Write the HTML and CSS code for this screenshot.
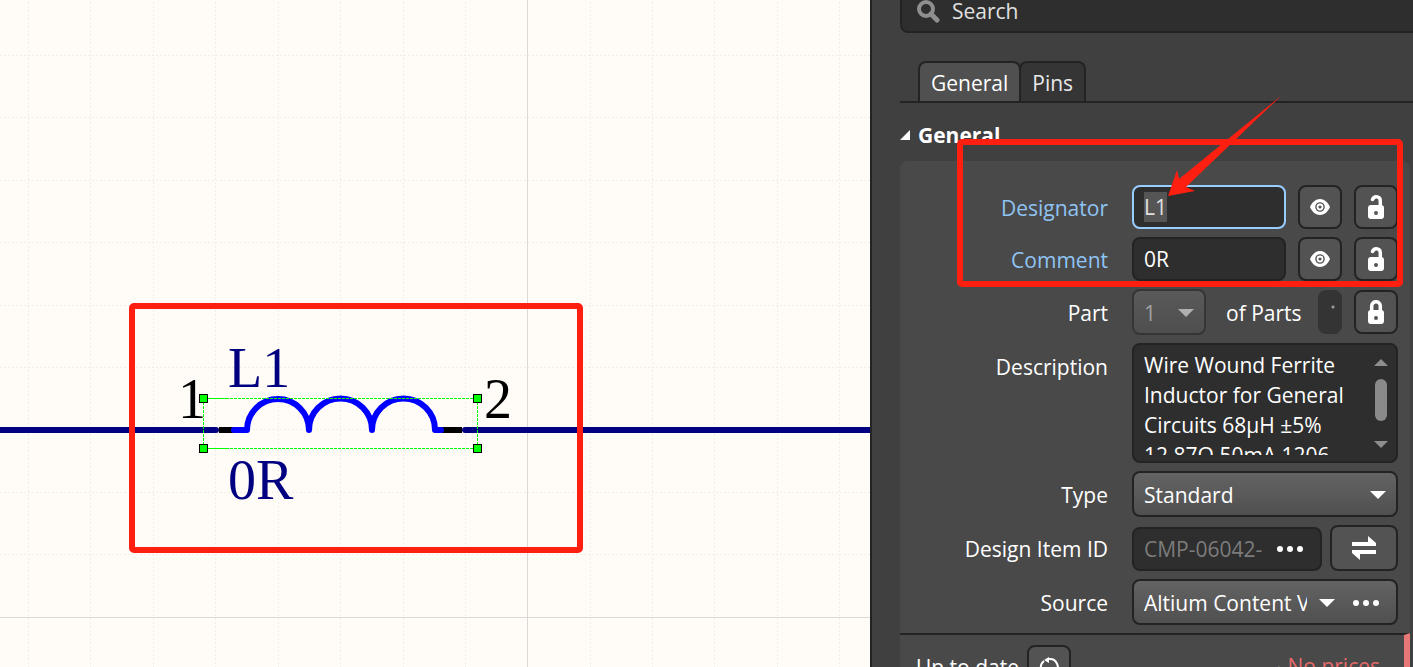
FILE: index.html
```html
<!DOCTYPE html>
<html lang="en">
<head>
    <meta charset="UTF-8">
    <title>Properties</title>
    <link rel="stylesheet" href="styles.css">
</head>

<body>

    <!-- icons -->
    <svg class="sprite" aria-hidden="true">
        <symbol id="eye" viewBox="0 0 20 16">
            <path fill="#fff" fill-rule="evenodd" d="M0 8 C2 3 6 0 10 0 C14 0 18 3 20 8 C18 13 14 16 10 16 C6 16 2 13 0 8 Z M10 3.200 A4.800 4.800 0 1 0 10 12.800 A4.800 4.800 0 1 0 10 3.200 Z"/>
            <circle cx="10" cy="8" r="2.500" fill="none" stroke="#fff" stroke-width="1.800"/>
        </symbol>
        <symbol id="unlock" viewBox="0 0 16 24">
            <path fill="none" stroke="#fff" stroke-width="3.500" stroke-linecap="round" d="M4.500 4.500 C5.500 2 8 1.600 9.500 1.900 C11.500 2.300 12.300 3.800 12.300 6 V11"/>
            <path fill="#fff" fill-rule="evenodd" d="M3 10 H13 Q16 10 16 13 V21 Q16 24 13 24 H3 Q0 24 0 21 V13 Q0 10 3 10 Z M8 16 A2 2 0 1 0 8 20 A2 2 0 1 0 8 16 Z"/>
        </symbol>
        <symbol id="lock" viewBox="0 0 16 24">
            <path fill="none" stroke="#fff" stroke-width="3.500" d="M3.700 11 V6 A4.300 4.300 0 0 1 12.300 6 V11"/>
            <path fill="#fff" fill-rule="evenodd" d="M3 10 H13 Q16 10 16 13 V21 Q16 24 13 24 H3 Q0 24 0 21 V13 Q0 10 3 10 Z M8 16 A2 2 0 1 0 8 20 A2 2 0 1 0 8 16 Z"/>
        </symbol>
        <symbol id="dots" viewBox="0 0 26 6">
            <g fill="#fff"><circle cx="3" cy="3" r="3"/><circle cx="13" cy="3" r="3"/><circle cx="23" cy="3" r="3"/></g>
        </symbol>
    </svg>

    <main class="schematic">
        <svg class="sheet" width="100%" height="100%">
            <!-- grid -->
            <path class="grid" d="M28.500 2V2000M90.500 2V2000M153.500 2V2000M215.500 2V2000M278.500 2V2000M340.500 2V2000M403.500 2V2000M465.500 2V2000M590.500 2V2000M652.500 2V2000M714.500 2V2000M777.500 2V2000M839.500 2V2000"/>
            <path class="grid" d="M0 55.500H3000M0 117.500H3000M0 180.500H3000M0 242.500H3000M0 305.500H3000M0 367.500H3000M0 429.500H3000M0 492.500H3000M0 554.500H3000"/>
            <path class="grid-major" d="M527.500 0V2000M0 617.500H3000"/>

            <!-- wires and pins -->
            <line class="wire" x1="0" y1="430" x2="216" y2="430"/>
            <line class="wire" x1="465" y1="430" x2="100%" y2="430"/>
            <path class="pin" d="M219 430H233M442 430H462"/>
            <path class="coil" d="M234 430H247 A31 31 0 0 1 309 430 A31 31 0 0 1 372 430 A31 31 0 0 1 435 430 H441"/>

            <!-- texts -->
            <text class="net" x="228" y="387">L1</text>
            <text class="net" x="228" y="499">0R</text>
            <text class="pin-no" x="178" y="418">1</text>
            <text class="pin-no" x="484" y="418">2</text>

            <!-- selection -->
            <path class="select-line" d="M226 398.500H477M226 448.500H477M203.500 398V448M477.500 398V448"/>
            <path class="select-solid" d="M203 398.500H227M203 448.500H227"/>
            <g class="handle">
                <rect x="199.500" y="394.500" width="8" height="8"/>
                <rect x="473.500" y="394.500" width="8" height="8"/>
                <rect x="199.500" y="444.500" width="8" height="8"/>
                <rect x="473.500" y="444.500" width="8" height="8"/>
            </g>

            <rect class="mark" x="132" y="306" width="448" height="244" rx="2"/>
        </svg>
    </main>

    <aside class="panel">
        <div class="search">
            <svg width="24" height="24" viewBox="0 0 24 24" fill="none" stroke="#8e8e8e">
                <circle cx="10" cy="10" r="7" stroke-width="4"/>
                <path d="M15 15L21 21" stroke-width="5" stroke-linecap="round"/>
            </svg>
            <input type="text" placeholder="Search" aria-label="Search">
        </div>

        <nav class="tabs">
            <button class="tab active">General</button>
            <button class="tab">Pins</button>
        </nav>

        <h2 class="section-title">
            <svg width="10" height="10" viewBox="0 0 10 10"><path d="M10 0V10H0Z" fill="#fff"/></svg>
            General
        </h2>

        <form class="card">
            <div class="fields">
                <label class="linked" for="designator">Designator</label>
                <div class="row">
                    <div class="field focused"><input type="text" id="designator" value="L1"></div>
                    <button type="button" class="btn" aria-label="Show designator"><svg width="20" height="16"><use href="#eye"/></svg></button>
                    <button type="button" class="btn" aria-label="Lock designator"><svg width="16" height="24"><use href="#unlock"/></svg></button>
                </div>

                <label class="linked" for="comment">Comment</label>
                <div class="row">
                    <div class="field"><input type="text" id="comment" value="0R"></div>
                    <button type="button" class="btn" aria-label="Show comment"><svg width="20" height="16"><use href="#eye"/></svg></button>
                    <button type="button" class="btn" aria-label="Lock comment"><svg width="16" height="24"><use href="#unlock"/></svg></button>
                </div>

                <label for="part">Part</label>
                <div class="row tall">
                    <div class="combo part">
                        <select id="part" disabled><option>1</option></select>
                        <svg class="arrow" width="16" height="8" viewBox="0 0 16 8"><path d="M0 0H16L8 8Z"/></svg>
                    </div>
                    <span class="of-parts">of Parts</span>
                    <div class="count"></div>
                    <button type="button" class="btn" aria-label="Lock part"><svg width="16" height="24"><use href="#lock"/></svg></button>
                </div>

                <label class="top" for="description">Description</label>
                <div class="memo">
                    <textarea id="description">Wire Wound Ferrite Inductor for General Circuits 68μH ±5% 12.87Ω 50mA 1206</textarea>
                    <div class="scroll">
                        <svg width="14" height="7" viewBox="0 0 14 7"><path d="M0 7H14L7 0Z"/></svg>
                        <div class="thumb"></div>
                        <svg width="14" height="7" viewBox="0 0 14 7"><path d="M0 0H14L7 7Z"/></svg>
                    </div>
                </div>

                <label for="type">Type</label>
                <div class="combo">
                    <select id="type"><option>Standard</option></select>
                    <svg class="arrow" width="16" height="8" viewBox="0 0 16 8"><path d="M0 0H16L8 8Z"/></svg>
                </div>

                <label for="item-id">Design Item ID</label>
                <div class="row id-row">
                    <div class="field">
                        <input type="text" id="item-id" value="CMP-06042-" disabled>
                        <button type="button" class="more" aria-label="Choose item"><svg width="26" height="6"><use href="#dots"/></svg></button>
                    </div>
                    <button type="button" class="btn wide" aria-label="Replace">
                        <svg width="24" height="24" viewBox="0 0 24 24"><path fill="#fff" d="M0 6H16V0L24 7V10H0ZM24 18H8V24L0 17V14H24Z"/></svg>
                    </button>
                </div>

                <label for="source">Source</label>
                <div class="combo source">
                    <select id="source"><option>Altium Content Vault</option></select>
                    <svg class="arrow" width="16" height="8" viewBox="0 0 16 8"><path d="M0 0H16L8 8Z"/></svg>
                    <button type="button" class="more" aria-label="Choose source"><svg width="26" height="6"><use href="#dots"/></svg></button>
                </div>
            </div>

            <div class="status">
                <span>Up to date</span>
                <button type="button" class="btn" aria-label="Refresh">
                    <svg width="20" height="20" viewBox="0 0 20 20" fill="none" stroke="#fff" stroke-width="2">
                        <path d="M4 16A8 8 0 0 1 5 4M10 2A8 8 0 0 1 16 16"/>
                        <path d="M10 0L5 3L10 6Z" fill="#fff" stroke="none"/>
                    </svg>
                </button>
                <span class="no-prices">No prices</span>
            </div>
        </form>

        <div class="mark-box"></div>
        <svg class="mark-arrow" width="114" height="101" viewBox="0 0 114 101">
            <path fill="#ff1f11" d="M0 101L9 75L11 84L114 0L18 92L27 96Z"/>
        </svg>
    </aside>

    <script>
        // start with the designator ready to be overwritten
        document.getElementById("designator").focus();
        document.getElementById("designator").select();
    </script>
</body>
</html>
```
FILE: styles.css
```css
* {
    box-sizing: border-box;
}

body {
    display: flex;
    margin: 0;
    height: 100vh;
    overflow: hidden;
    background: #404040;
    color: #fff;
    font-family: "Open Sans", "Noto Sans", sans-serif;
    font-size: 21px;
    line-height: 30px;
}

button, input, select, textarea {
    margin: 0;
    padding: 0;
    border: none;
    outline: none;
    background: none;
    color: inherit;
    font: inherit;
}

svg {
    display: block;
    flex: none;
}

.sprite {
    position: absolute;
    width: 0;
    height: 0;
}

/* schematic */
.schematic {
    flex: 1;
    min-width: 0;
    overflow: hidden;
    background: #fffcf8;
}

.grid {
    fill: none;
    stroke: #efeeeb;
    stroke-dasharray: 2 2;
}

.grid-major {
    fill: none;
    stroke: #dad9d6;
}

.wire {
    stroke: #000080;
    stroke-width: 6;
    stroke-linecap: round;
}

.pin {
    stroke: #000;
    stroke-width: 6;
}

.coil {
    fill: none;
    stroke: #00f;
    stroke-width: 6;
    stroke-linecap: round;
    stroke-linejoin: round;
}

.net, .pin-no {
    font-family: "Liberation Serif", serif;
    font-size: 56px;
}

.net {
    fill: #000080;
}

.select-line, .select-solid {
    stroke: #0f0;
}

.select-line {
    stroke-dasharray: 3 1;
}

.handle {
    fill: #0f0;
    stroke: #000;
}

.mark {
    fill: none;
    stroke: #ff1f11;
    stroke-width: 6;
}

/* properties panel */
.panel {
    position: relative;
    flex: 0 0 543px;
    padding-left: 28px;
    border-left: 2px solid #232323;
}

.search {
    display: flex;
    align-items: center;
    gap: 12px;
    height: 33px;
    padding: 0 0 9px 14px;
    border: solid #232323;
    border-width: 0 0 2px 2px;
    border-radius: 0 0 0 8px;
    background: #2e2e2e;
}

.search input {
    flex: 1;
    min-width: 0;
}

.search input::placeholder {
    color: #e0e0e0;
}

.tabs {
    display: flex;
    margin-top: 28px;
    padding-left: 18px;
    border-bottom: 2px solid #232323;
}

.tab {
    height: 40px;
    padding: 2px 11px 0;
    border: 2px solid #232323;
    border-bottom: none;
    border-radius: 8px 8px 0 0;
    background: #353535;
    color: #e8e8e8;
}

.tab + .tab {
    margin-left: -2px;
}

.tab.active {
    background: #505050;
    color: #fff;
}

.section-title {
    display: flex;
    align-items: center;
    gap: 8px;
    height: 58px;
    margin: 0;
    padding-top: 6px;
    font-size: 21px;
}

.card {
    margin-right: 3px;
    padding-top: 24px;
    border-radius: 8px 8px 0 0;
    background: #494949;
}

.fields {
    display: grid;
    grid-template-columns: 208px minmax(0, 1fr);
    gap: 8px 24px;
    align-items: center;
    padding: 0 12px 8px 0;
}

.fields label {
    padding-top: 2px;
    text-align: right;
}

.fields .linked {
    color: #8fc4f4;
}

.fields .top {
    align-self: start;
    padding-top: 9px;
}

.row {
    display: flex;
    align-items: center;
    gap: 12px;
}

.tall {
    height: 46px;
}

.field {
    display: flex;
    flex: 1;
    align-items: center;
    min-width: 0;
    height: 44px;
    padding: 0 10px;
    border: 2px solid #232323;
    border-radius: 8px;
    background: #2e2e2e;
}

.field input {
    flex: 1;
    min-width: 0;
    width: 0;
}

.field input:disabled {
    color: #7c7c7c;
}

.focused {
    border-color: #99ccff;
}

.focused input::selection {
    background: #555;
    color: #e0e0e0;
}

.btn {
    display: flex;
    flex: none;
    align-items: center;
    justify-content: center;
    width: 44px;
    height: 44px;
    border: 2px solid #232323;
    border-radius: 8px;
    background: #535353;
}

.combo {
    display: flex;
    align-items: center;
    height: 46px;
    padding: 2px 10px 0;
    border: 2px solid #232323;
    border-radius: 8px;
    background: linear-gradient(#636363, #505050);
}

.combo select {
    flex: 1;
    min-width: 0;
    width: 0;
    height: 30px;
    overflow: hidden;
    appearance: none;
    opacity: 1;
}

.arrow {
    fill: #fff;
}

.part {
    width: 74px;
    border-color: #353535;
    background: linear-gradient(#5a5a5a, #4e4e4e);
    color: #a0a0a0;
}

.part .arrow {
    fill: #b0b0b0;
}

.of-parts {
    flex: 1;
    padding: 2px 0 0 8px;
    white-space: nowrap;
}

.count {
    width: 24px;
    height: 44px;
    border-radius: 8px;
    background: radial-gradient(circle at 15px 17px, #999 1px, #343434 2px);
}

.memo {
    display: flex;
    height: 120px;
    padding: 5px 8px 6px 10px;
    border: 2px solid #232323;
    border-radius: 8px;
    background: #2e2e2e;
}

.memo textarea {
    flex: 1;
    min-width: 0;
    overflow: hidden;
    resize: none;
}

.scroll {
    display: flex;
    flex-direction: column;
    align-items: center;
    justify-content: space-between;
    padding: 9px 0 7px;
    fill: #8e8e8e;
}

.thumb {
    width: 12px;
    height: 42px;
    margin-bottom: 8px;
    border-radius: 6px;
    background: #8a8a8a;
}

.id-row {
    align-items: flex-end;
    gap: 8px;
}

.id-row .field {
    padding-right: 17px;
}

.id-row input {
    margin-right: 8px;
}

.wide {
    width: 68px;
    height: 46px;
}

.source {
    gap: 18px;
    padding-right: 17px;
}

.source select {
    margin-right: -6px;
}

.status {
    display: flex;
    align-items: center;
    gap: 8px;
    height: 66px;
    padding: 0 24px 0 16px;
    border-top: 2px solid #232323;
    border-right: 6px solid #e87878;
}

.no-prices {
    margin-left: auto;
    color: #e56a6a;
}

.no-prices::before {
    content: "•";
    margin-right: 6px;
    color: #999;
    font-size: 14px;
}

/* callout */
.mark-box {
    position: absolute;
    top: 139px;
    left: 85px;
    right: 10px;
    height: 148px;
    border: 6px solid #ff1f11;
    border-radius: 5px;
    pointer-events: none;
}

.mark-arrow {
    position: absolute;
    top: 95px;
    left: 296px;
    pointer-events: none;
}
```
